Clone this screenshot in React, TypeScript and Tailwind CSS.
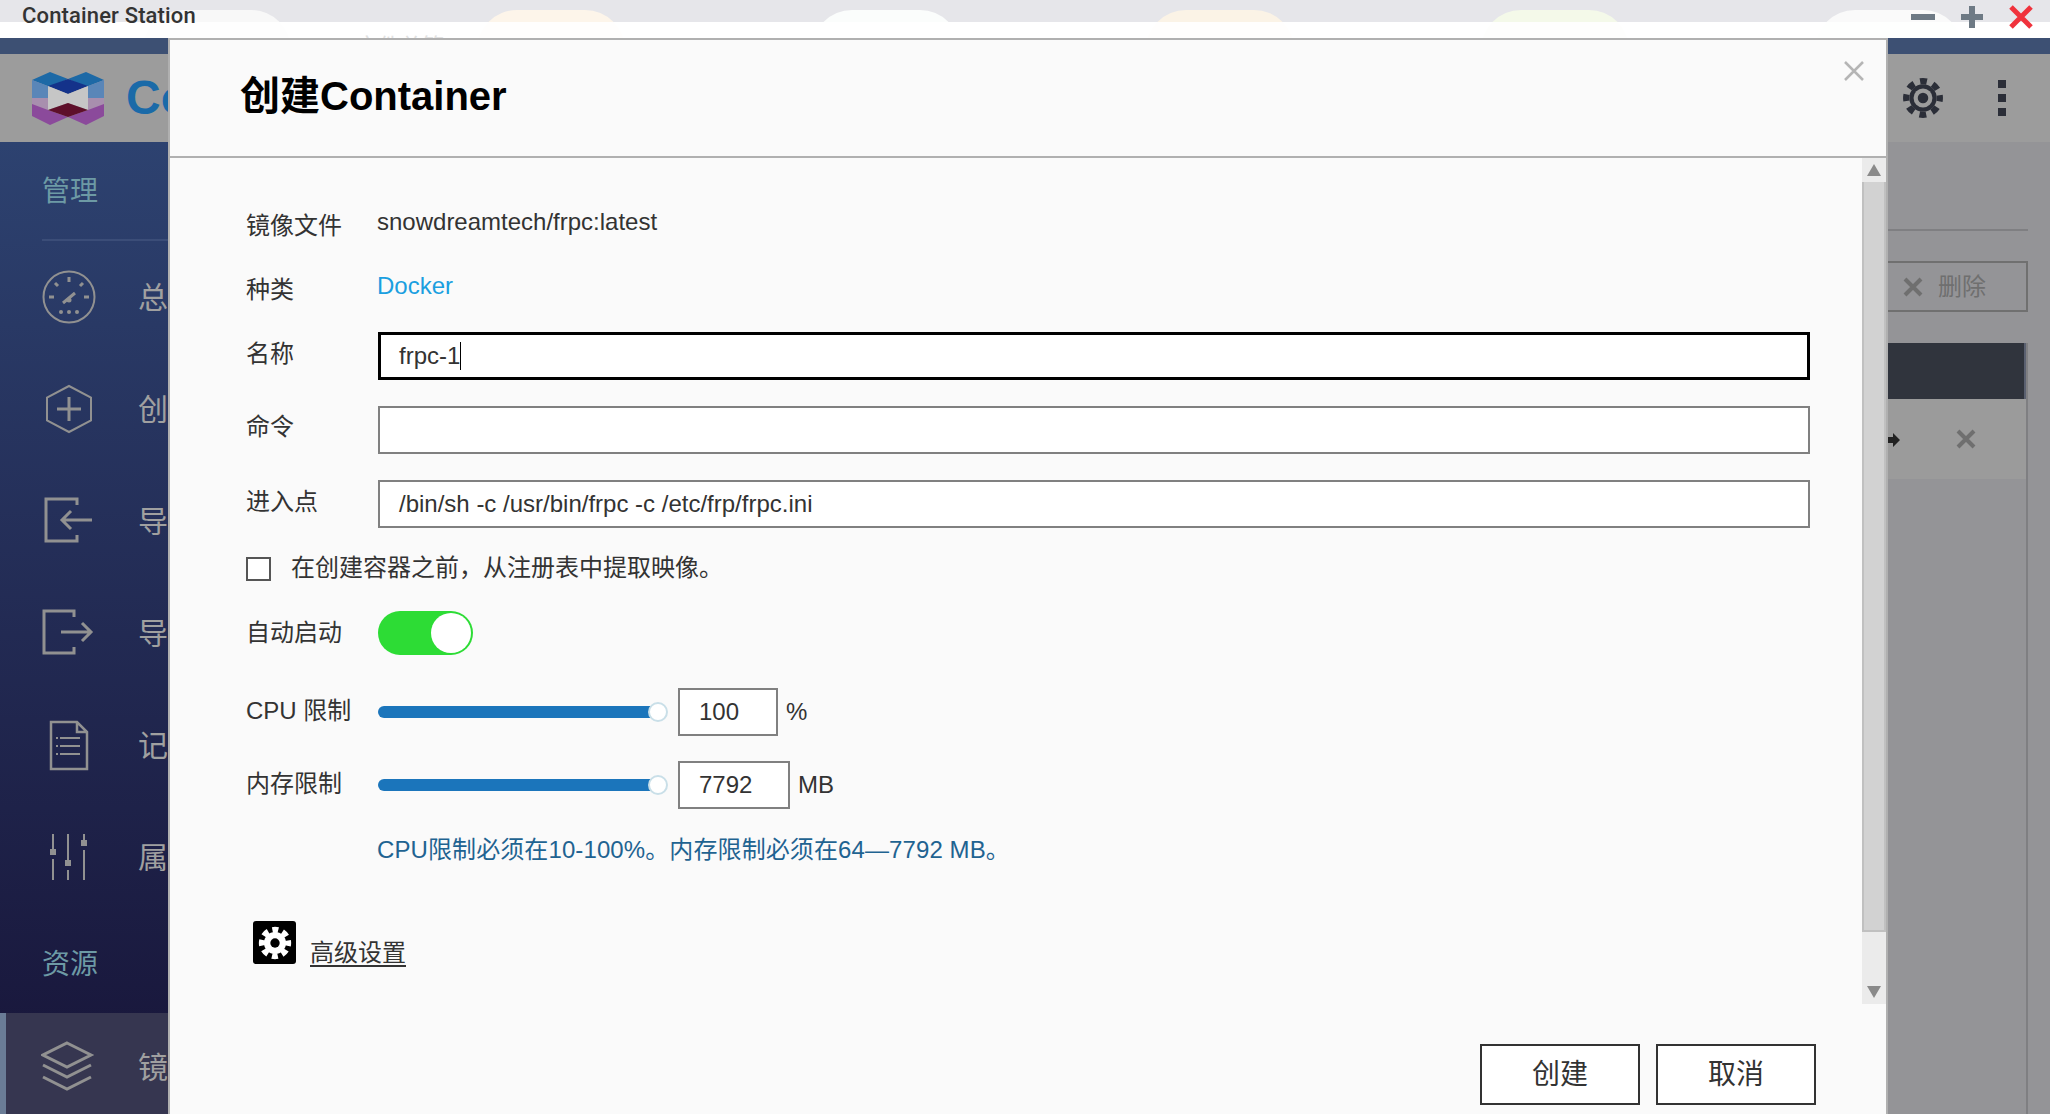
import React from "react"

const tabs = ["bg-[#f8f8f8]", "bg-[#fdf5ea]", "bg-[#fbfdfc]", "bg-[#fbf3e6]", "bg-[#f4f9e9]", "bg-[#fafafa]"]

const Gauge = () => (
  <svg className="shrink-0" width="56" height="56" viewBox="0 0 56 56" fill="none" stroke="#919191" strokeWidth="2">
    <circle cx="28" cy="28" r="25.500" />
    <path strokeWidth="3" d="M28 8v5M14 14l3 3M42 14l-3 3M8 28h5M48 28h-5M22 34l12-10" />
    <circle cx="28" cy="31" r="2.500" fill="#919191" stroke="none" />
    <circle cx="20" cy="43" r="2" fill="#919191" stroke="none" />
    <circle cx="28" cy="43" r="2" fill="#919191" stroke="none" />
    <circle cx="36" cy="43" r="2" fill="#919191" stroke="none" />
  </svg>
)

const HexPlus = () => (
  <svg className="shrink-0" width="56" height="56" viewBox="0 0 56 56" fill="none" stroke="#919191" strokeWidth="2">
    <path d="M28 5 50 16.500v23L28 51 6 39.500v-23z" />
    <path strokeWidth="3" d="M28 16v24M16 28h24" />
  </svg>
)

const ImportIcon = () => (
  <svg className="shrink-0" width="56" height="56" viewBox="0 0 56 56" fill="none" stroke="#919191" strokeWidth="3">
    <path d="M36 12V6H5v42h31v-6" />
    <path d="M51 27H22M30 18l-9 9 9 9" />
  </svg>
)

const ExportIcon = () => (
  <svg className="shrink-0" width="56" height="56" viewBox="0 0 56 56" fill="none" stroke="#919191" strokeWidth="3">
    <path d="M33 12V6H3v42h30v-6" />
    <path d="M20 27h29M41 18l9 9-9 9" />
  </svg>
)

const LogIcon = () => (
  <svg className="shrink-0" width="56" height="56" viewBox="0 0 56 56" fill="none" stroke="#919191" strokeWidth="2.500">
    <path d="M10 5h26l10 10v37H10zM36 5v10h10" />
    <path strokeWidth="2" d="M19 21h20M19 29h20M19 37h20M15 21h2M15 29h2M15 37h2" />
  </svg>
)

const SlidersIcon = () => (
  <svg className="shrink-0" width="56" height="56" viewBox="0 0 56 56" fill="none" stroke="#919191" strokeWidth="2">
    <path d="M12 5v15M12 30v21M27 5v26M27 41v10M43 5v6M43 21v30" />
    <rect x="9" y="20" width="6" height="6" fill="#919191" stroke="none" />
    <rect x="24" y="31" width="6" height="6" fill="#919191" stroke="none" />
    <rect x="40" y="11" width="6" height="6" fill="#919191" stroke="none" />
  </svg>
)

const LayersIcon = () => (
  <svg className="shrink-0" width="56" height="56" viewBox="0 0 56 56" fill="none" stroke="#919191" strokeWidth="3">
    <path d="M26 3 50 15 26 27 2 15z" />
    <path d="M2 25l24 12 24-12M2 37l24 12 24-12" />
  </svg>
)

// header gear: dark teeth and body, grey ring, dark dot
const HeaderGear = () => (
  <svg width="42" height="42" viewBox="0 0 40 40">
    <circle cx="20" cy="20" r="16" fill="none" stroke="#2b2e38" strokeWidth="6" strokeDasharray="6.560 6" strokeDashoffset="3.280" />
    <circle cx="20" cy="20" r="13" fill="#2b2e38" />
    <circle cx="20" cy="20" r="9" fill="#9c9c9c" />
    <circle cx="20" cy="20" r="5" fill="#2b2e38" />
  </svg>
)

const WhiteGear = () => (
  <svg width="34" height="34" viewBox="0 0 40 40">
    <circle cx="20" cy="20" r="15.500" fill="none" stroke="#fff" strokeWidth="7" strokeDasharray="6.960 5.200" strokeDashoffset="3.480" />
    <circle cx="20" cy="20" r="13" fill="#fff" />
    <circle cx="20" cy="20" r="5.500" fill="#000" />
  </svg>
)

const Logo = () => (
  <svg width="72" height="54" viewBox="0 0 72 54">
    <path d="M0 9 18 1 36 8 18 16z" fill="#1d69a6" />
    <path d="M36 8 54 1 72 9 54 16z" fill="#1d69a6" />
    <path d="M16 15 36 8 56 15 36 23z" fill="#14328a" />
    <path d="M0 9 16 15V27H0z" fill="#5a86b8" />
    <path d="M72 9 56 15V27H72z" fill="#5a86b8" />
    <path d="M16 15 36 23 56 15V39L36 32 16 39z" fill="#c6c6c6" />
    <path d="M0 27H16V39L0 37z" fill="#a88fae" />
    <path d="M72 27H56V39L72 37z" fill="#a88fae" />
    <path d="M0 33 16 39 36 46 18 54 0 45z" fill="#8b4a9b" />
    <path d="M72 33 56 39 36 46 54 54 72 45z" fill="#8b4a9b" />
    <path d="M16 39 36 32 56 39 36 46z" fill="#5e0f2a" />
  </svg>
)

const NavItem = ({ icon, label }: { icon: React.ReactNode; label: string }) => (
  <div className="flex h-[112px] shrink-0 items-center gap-[41px] whitespace-nowrap pl-[41px] text-[30px] text-[#a0a0a0]">
    {icon}
    <span>{label}</span>
  </div>
)

const Label = ({ children, className }: { children: React.ReactNode; className?: string }) => (
  <div className={"w-[132px] shrink-0 whitespace-nowrap text-[24px] text-[#333] " + (className ?? "")}>{children}</div>
)

const Slider = () => (
  <div className="relative flex h-[20px] w-[290px] items-center">
    <div className="h-[12px] w-[274px] rounded-l-md bg-[#1b75bb]" />
    <div className="absolute right-[0px] h-[20px] w-[20px] rounded-full border-2 border-[#c9dfe8] bg-white" />
  </div>
)

export default function App() {
  return (
    <div className="relative flex h-[1114px] w-[2050px] flex-col overflow-hidden bg-[#949497] font-['Liberation_Sans','Noto_Sans_CJK_SC',sans-serif]">
      {/* window title bar */}
      <div className="relative h-[38px] shrink-0 overflow-hidden bg-white">
        <div className="h-[22px] bg-[#e6e6ea]" />
        <div className="absolute inset-x-0 top-[10px] flex justify-between pl-[143px] pr-[87px]">
          {tabs.map((t, i) => (
            <div key={i} className={"h-[40px] w-[148px] rounded-t-[40px] " + t} />
          ))}
        </div>
        <div className="absolute inset-x-0 top-[22px] h-[16px] bg-white/90" />
        <div className="absolute left-[240px] top-[30px] text-[22px] text-[#e2e2e2]">File Station 文件总管</div>
        <div className="absolute left-[22px] top-[3px] font-['Roboto'] text-[22px] font-medium leading-[26px] tracking-[0.15px] text-[#333]">Container Station</div>
        <div className="absolute right-[16px] top-[4px] flex items-center gap-[23px]">
          <svg width="26" height="26" viewBox="0 0 26 26">
            <path d="M1 13h24" stroke="#6e7a85" strokeWidth="6" />
          </svg>
          <svg width="26" height="26" viewBox="0 0 26 26">
            <path d="M13 2v22M2 13h22" stroke="#6e7a85" strokeWidth="6" />
          </svg>
          <svg width="26" height="26" viewBox="0 0 26 26">
            <path d="M3 3l20 20M23 3 3 23" stroke="#f0323c" strokeWidth="5" />
          </svg>
        </div>
      </div>

      <div className="h-[16px] shrink-0 bg-[#3d5073]" />

      {/* app header */}
      <div className="flex h-[88px] shrink-0 items-center bg-[#9c9c9c] pl-[32px]">
        <Logo />
        <span className="ml-[22px] w-[42px] overflow-hidden whitespace-nowrap text-[48px] font-bold text-[#1a6aa8]">Container Station</span>
        <div className="ml-auto mr-[44px] flex items-center gap-[54px]">
          <HeaderGear />
          <div className="flex flex-col gap-[6px]">
            <div className="h-[8px] w-[8px] bg-[#2b2e38]" />
            <div className="h-[8px] w-[8px] bg-[#2b2e38]" />
            <div className="h-[8px] w-[8px] bg-[#2b2e38]" />
          </div>
        </div>
      </div>

      <div className="flex min-h-0 flex-1">
        {/* sidebar */}
        <div className="flex w-[168px] shrink-0 flex-col overflow-hidden bg-gradient-to-b from-[#2d4270] to-[#171438]">
          <div className="ml-[42px] flex h-[99px] shrink-0 items-center border-b-2 border-[#3b4d78] pt-[2px] text-[28px] text-[#6d9aa5]">管理</div>
          <NavItem icon={<Gauge />} label="总览" />
          <NavItem icon={<HexPlus />} label="创建" />
          <NavItem icon={<ImportIcon />} label="导入" />
          <NavItem icon={<ExportIcon />} label="导出" />
          <NavItem icon={<LogIcon />} label="记录" />
          <NavItem icon={<SlidersIcon />} label="属性" />
          <div className="ml-[42px] flex h-[100px] shrink-0 items-center pt-[4px] text-[28px] text-[#6d9aa5]">资源</div>
          <div className="flex flex-1 items-center gap-[41px] whitespace-nowrap border-l-[6px] border-[#6a7c96] bg-[#363650] pl-[35px] pt-[8px] text-[30px] text-[#a0a0a0]">
            <LayersIcon />
            <span>镜像</span>
          </div>
        </div>

        {/* page behind the dialog */}
        <div className="flex flex-1 flex-col pl-[1720px] pr-[22px]">
          <div className="h-[89px] shrink-0 border-b-2 border-[#7f7f82]" />
          <div className="mt-[30px] flex h-[51px] shrink-0 items-center border-2 border-l-0 border-[#707070] pl-[14px] text-[24px] text-[#6f6f6f]">
            <svg width="22" height="22" viewBox="0 0 22 22">
              <path d="M3 3l16 16M19 3 3 19" stroke="#6f6f6f" strokeWidth="4" />
            </svg>
            <span className="ml-[14px]">删除</span>
          </div>
          <div className="mt-[31px] flex-1 border-r-2 border-[#7f7f82]">
            <div className="h-[56px] border-r-2 border-[#5a6070] bg-[#30343d]" />
            <div className="relative flex h-[80px] items-center justify-end bg-[#9b9b9b] pr-[50px]">
              <svg className="absolute left-0 top-[34px]" width="12" height="14" viewBox="0 0 12 14">
                <path d="M0 4h5V0l7 7-7 7v-4H0z" fill="#222" />
              </svg>
              <svg width="20" height="20" viewBox="0 0 20 20">
                <path d="M2 2l16 16M18 2 2 18" stroke="#6f6f6f" strokeWidth="4" />
              </svg>
            </div>
          </div>
        </div>
      </div>

      {/* create container dialog */}
      <div className="absolute bottom-0 left-[168px] top-[38px] flex w-[1720px] flex-col border-x-2 border-t-2 border-[#b0b0b0] bg-[#fafafa]">
        <div className="relative flex h-[118px] shrink-0 items-center border-b-2 border-[#b0b0b0] pb-[4px] pl-[70px] text-[40px] font-bold text-black">
          创建Container
          <svg className="absolute right-[21px] top-[20px]" width="22" height="22" viewBox="0 0 22 22">
            <path d="M2 2l18 18M20 2 2 20" stroke="#b5b5b5" strokeWidth="2.500" />
          </svg>
        </div>

        <div className="flex h-[846px] shrink-0">
          <div className="flex-1 pl-[76px] pr-[52px] text-[24px] text-[#333]">
            <div className="mt-[40px] flex h-[48px] items-center">
              <Label className="pt-[8px]">镜像文件</Label>
              <span className="-ml-px">snowdreamtech/frpc:latest</span>
            </div>
            <div className="mt-[16px] flex h-[48px] items-center">
              <Label className="pt-[8px]">种类</Label>
              <span className="-ml-px text-[#1a9fe0]">Docker</span>
            </div>
            <div className="mt-[22px] flex h-[48px] items-center">
              <Label className="pb-[4px]">名称</Label>
              <div className="flex h-full flex-1 items-center border-[3px] border-black bg-white pl-[18px]">
                frpc-1<span className="h-[28px] w-[1px] bg-black" />
              </div>
            </div>
            <div className="mt-[26px] flex h-[48px] items-center">
              <Label className="pb-[6px]">命令</Label>
              <div className="h-full flex-1 border-2 border-[#808080] bg-white" />
            </div>
            <div className="mt-[26px] flex h-[48px] items-center">
              <Label className="pb-[4px]">进入点</Label>
              <div className="flex h-full flex-1 items-center border-2 border-[#808080] bg-white pl-[19px]">/bin/sh -c /usr/bin/frpc -c /etc/frp/frpc.ini</div>
            </div>
            <div className="mt-[28px] flex h-[26px] items-center gap-[20px]">
              <div className="h-[24px] w-[25px] border-2 border-[#555] bg-white" />
              <span className="-translate-y-px">在创建容器之前，从注册表中提取映像。</span>
            </div>
            <div className="mt-[28px] flex h-[46px] items-center">
              <Label>自动启动</Label>
              <div className="flex h-[44px] w-[95px] items-center justify-end rounded-full bg-[#2ddc35] pr-[2px]">
                <div className="h-[40px] w-[40px] rounded-full bg-white" />
              </div>
            </div>
            <div className="mt-[32px] flex h-[48px] items-center">
              <Label className="-translate-y-px">CPU 限制</Label>
              <Slider />
              <div className="ml-[10px] flex h-full w-[100px] items-center border-2 border-[#808080] bg-white pl-[19px]">100</div>
              <span className="ml-[8px]">%</span>
            </div>
            <div className="mt-[25px] flex h-[48px] items-center">
              <Label className="-translate-y-px">内存限制</Label>
              <Slider />
              <div className="ml-[10px] flex h-full w-[112px] items-center border-2 border-[#808080] bg-white pl-[19px]">7792</div>
              <span className="ml-[8px]">MB</span>
            </div>
            <div className="ml-[131px] mt-[23px] tracking-[0.1px] text-[#1f6391]">CPU限制必须在10-100%。内存限制必须在64—7792 MB。</div>
            <div className="ml-[7px] mt-[53px] flex items-end gap-[14px]">
              <div className="flex h-[43px] w-[43px] items-center justify-center rounded-[3px] bg-black">
                <WhiteGear />
              </div>
              <span className="translate-y-[7px] underline underline-offset-4">高级设置</span>
            </div>
          </div>

          <div className="flex w-[24px] shrink-0 flex-col items-center bg-[#ebebeb]">
            <div className="flex h-[24px] items-center">
              <div className="h-0 w-0 border-x-[7px] border-b-[12px] border-x-transparent border-b-[#8a8a8a]" />
            </div>
            <div className="h-[750px] w-full border-x-2 border-b-2 border-[#c0c0c0] bg-[#d2d2d2]" />
            <div className="mt-auto flex h-[24px] items-center">
              <div className="h-0 w-0 border-x-[7px] border-t-[12px] border-x-transparent border-t-[#8a8a8a]" />
            </div>
          </div>
        </div>

        <div className="flex justify-end gap-[16px] pr-[70px] pt-[40px]">
          <div className="flex h-[61px] w-[160px] items-center justify-center border-2 border-[#333] bg-white text-[28px] text-[#333]">创建</div>
          <div className="flex h-[61px] w-[160px] items-center justify-center border-2 border-[#333] bg-white text-[28px] text-[#333]">取消</div>
        </div>
      </div>
    </div>
  )
}
